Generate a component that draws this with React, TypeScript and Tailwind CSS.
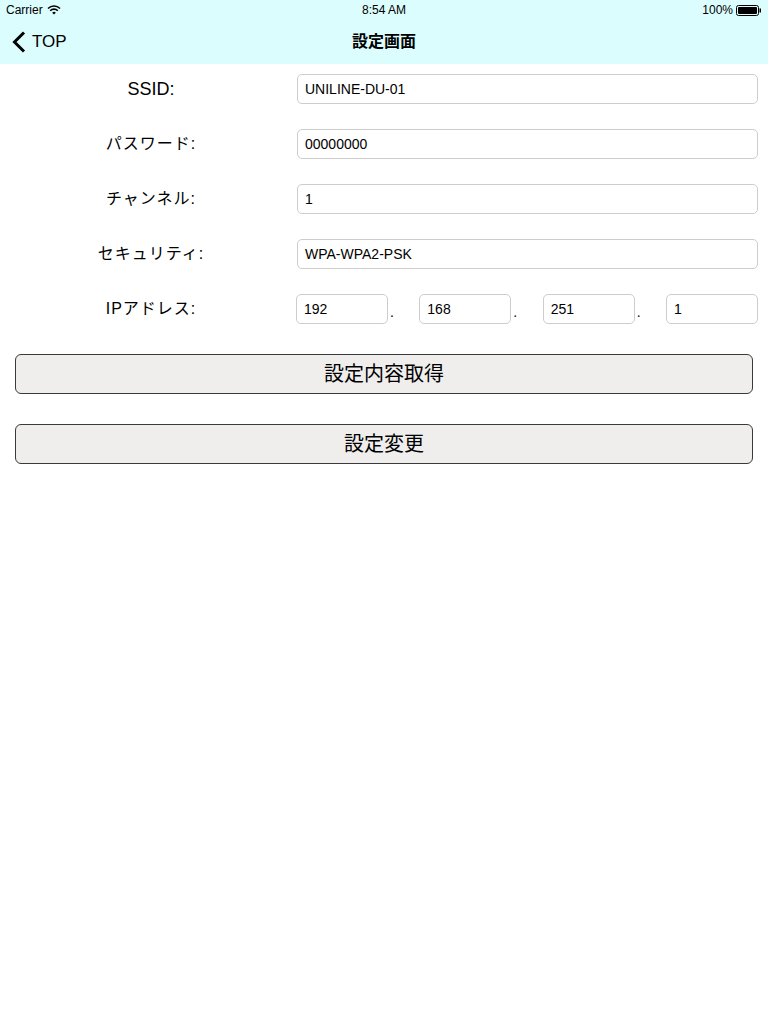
const font = "font-['Helvetica','Liberation_Sans','Noto_Sans_CJK_JP',sans-serif]";

function Field({ value }: { value: string }) {
  return (
    <div className="flex h-[30px] flex-1 items-center rounded-[5px] border border-[#cdcdcd] bg-white px-[7px] text-[14px] text-black">
      {value}
    </div>
  );
}

function Row({ label, big, children }: { label: string; big?: boolean; children: React.ReactNode }) {
  return (
    <div className="flex h-[30px] items-center">
      <div className={`w-[297px] pl-[5px] text-center text-black ${big ? 'text-[18px]' : 'text-[16px] tracking-[1px]'}`}>
        {label}
      </div>
      <div className="mr-[10px] flex flex-1 items-center">{children}</div>
    </div>
  );
}

function IpBox({ value, dot }: { value: string; dot?: boolean }) {
  return (
    <div className="flex items-end">
      <div className="flex h-[30px] w-[92px] items-center rounded-[5px] border border-[#cdcdcd] bg-white px-[7px] text-[14px] text-black">
        {value}
      </div>
      {dot && <div className="pb-[5px] pl-[2px] text-[14px] leading-none text-black">.</div>}
    </div>
  );
}

export default function App() {
  return (
    <div className={`${font} min-h-[1024px] w-[768px] bg-white`}>
      {/* status + nav bar */}
      <div className="h-[64px] bg-[#dcfdfd]">
        <div className="flex h-[20px] items-center justify-between px-[6px] text-[12px] text-black">
          <div className="flex w-[120px] items-center gap-[4px]">
            <span>Carrier</span>
            <svg width="14" height="10" viewBox="0 0 14 10">
              <path d="M1 3.5a8.5 8.5 0 0 1 12 0" stroke="black" strokeWidth="1.6" fill="none" />
              <path d="M3.2 5.7a5.3 5.3 0 0 1 7.6 0" stroke="black" strokeWidth="1.6" fill="none" />
              <path d="M7 9.5 L5.2 7.7 a2.6 2.6 0 0 1 3.6 0 Z" fill="black" />
            </svg>
          </div>
          <span className="font-medium">8:54 AM</span>
          <div className="flex w-[120px] items-center justify-end gap-[3px]">
            <span className="font-medium">100%</span>
            <svg width="26" height="11" viewBox="0 0 26 11">
              <rect x="0.5" y="0.5" width="22" height="10" rx="2" stroke="black" fill="none" />
              <rect x="2" y="2" width="19" height="7" rx="1" fill="black" />
              <rect x="23.5" y="3.5" width="1.5" height="4" fill="black" />
            </svg>
          </div>
        </div>
        <div className="relative flex h-[44px] items-center">
          <div className="flex items-center pl-[11px]">
            <svg width="16" height="22" viewBox="0 0 16 22">
              <path d="M13 1.5 L3.5 11 L13 20.5" stroke="black" strokeWidth="3" fill="none" />
            </svg>
            <span className="ml-[5px] text-[17px] text-black">TOP</span>
          </div>
          <div className="absolute left-1/2 -translate-x-1/2 text-[16px] font-semibold text-black">設定画面</div>
        </div>
      </div>

      <div className="flex flex-col gap-[25px] pt-[10px]">
        <Row label="SSID:" big>
          <Field value="UNILINE-DU-01" />
        </Row>
        <Row label="パスワード:">
          <Field value="00000000" />
        </Row>
        <Row label="チャンネル:">
          <Field value="1" />
        </Row>
        <Row label="セキュリティ:">
          <Field value="WPA-WPA2-PSK" />
        </Row>
        <Row label="IPアドレス:">
          <div className="-ml-[1px] flex w-[462px] items-center justify-between">
            <IpBox value="192" dot />
            <IpBox value="168" dot />
            <IpBox value="251" dot />
            <IpBox value="1" />
          </div>
        </Row>
      </div>

      <div className="flex flex-col gap-[30px] px-[15px] pt-[30px]">
        <button className="h-[40px] w-full rounded-[6px] border border-[#3a3a3a] bg-[#efeeed] text-[20px] text-black">
          設定内容取得
        </button>
        <button className="h-[40px] w-full rounded-[6px] border border-[#3a3a3a] bg-[#efeeed] text-[20px] text-black">
          設定変更
        </button>
      </div>
    </div>
  );
}
